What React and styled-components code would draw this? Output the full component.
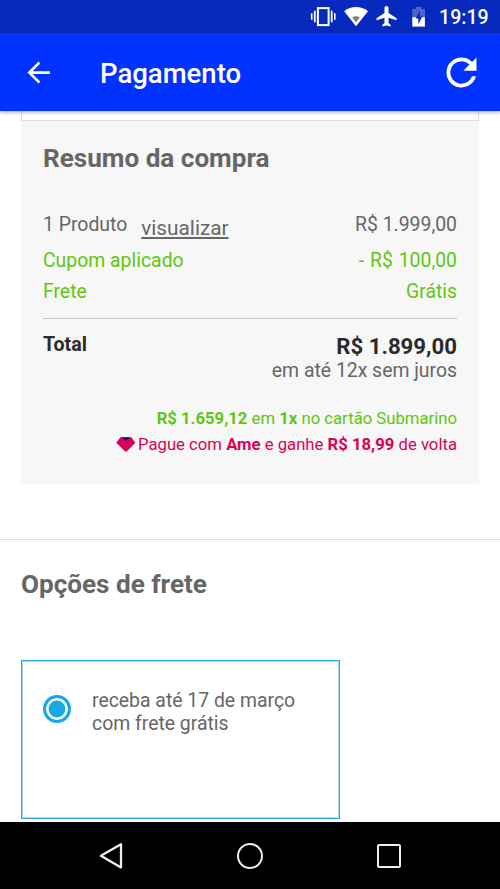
import React, { useState } from "react";
import styled, { createGlobalStyle } from "styled-components";

const summaryRows = [
  { id: "coupon", label: "Cupom aplicado", value: "- R$ 100,00", height: 31 },
  { id: "shipping", label: "Frete", value: "Grátis", height: 30 },
];

const StatusIcons = () => (
  <svg width="118" height="33" viewBox="310 0 118 33" fill="none">
    {/* vibrate */}
    <rect x="317.9" y="8.1" width="10.7" height="17" stroke="#fff" strokeWidth="2" />
    <path d="M314.8 10.7v11.6M331.7 10.7v11.6" stroke="#fff" strokeWidth="1.8" />
    <path d="M311.7 13.2v6.6M334.8 13.2v6.6" stroke="#fff" strokeWidth="1.6" />
    {/* wifi */}
    <path d="M344.2 11.2Q349.5 7 356 7T368 11.2L356 26.2z" fill="#fff" />
    <path d="M352.2 17.3q3.8-2 7.6 0L356 22.6z" fill="#7f8078" />
    {/* airplane */}
    <path
      d="M396.6 20.3v-2.1l-8.1-5.3V7.8c0-1.1-.9-1.9-2-1.9s-2 .8-2 1.9v5.1l-8 5.3v2.1l8-2.6v5.4l-2.1 1.6v1.9l4.1-1.1 4.1 1.1v-1.9l-2.1-1.6v-5.4z"
      fill="#fff"
    />
    {/* battery */}
    <path d="M412.3 8.9h3.6V7h5.4v1.9h3.6v9h-12.6z" fill="#5165c8" />
    <path d="M412.3 17.3h12.6v9.3h-12.6z" fill="#fff" />
    <path d="M419.8 10.8l-4.2 7.6h2.7v5.8l4-7.6h-2.5z" fill="#0a2ab8" />
  </svg>
);

const BackIcon = () => (
  <svg width="33" height="33" viewBox="0 0 24 24">
    <path
      d="M20.3 11H7.7l5.6-5.6L12 4 4 12l8 8 1.3-1.4L7.7 13h12.6z"
      fill="#fff"
    />
  </svg>
);

const RefreshIcon = () => (
  <svg width="45" height="45" viewBox="0 0 24 24">
    <path
      d="M17.65 6.35A7.96 7.96 0 0 0 12 4a8 8 0 1 0 7.73 10h-2.08A6 6 0 1 1 12 6c1.66 0 3.14.69 4.22 1.78L13 11h7V4z"
      fill="#fff"
    />
  </svg>
);

const AmeIcon = () => (
  <svg width="20" height="16" viewBox="0 0 20 16">
    <path d="M4.4.3h10.9L19.4 5.8l-8.2 8.3q-1.3 1.2-2.5 0L.3 5.8z" fill="#d5005c" />
    <path d="M5.6.3h8.8L9.9 3.6z" fill="#22106c" />
  </svg>
);

const App = () => {
  const [selected, setSelected] = useState(true);

  return (
    <Screen>
      <GlobalStyle />
      <StatusBar>
        <StatusIcons />
        <Clock>19:19</Clock>
      </StatusBar>
      <AppBar>
        <IconButton aria-label="Voltar">
          <BackIcon />
        </IconButton>
        <PageTitle>Pagamento</PageTitle>
        <IconButton aria-label="Atualizar">
          <RefreshIcon />
        </IconButton>
      </AppBar>

      <Content>
        <PreviousBox />
        <Summary>
          <SectionTitle>Resumo da compra</SectionTitle>
          <ProductRow>
            <span>1 Produto</span>
            <ViewLink>visualizar</ViewLink>
            <Price>R$ 1.999,00</Price>
          </ProductRow>
          {summaryRows.map(({ id, label, value, height }) => (
            <DiscountRow key={id} $height={height}>
              <span>{label}</span>
              <DiscountValue>{value}</DiscountValue>
            </DiscountRow>
          ))}
          <Divider />
          <TotalRow>
            <TotalLabel>Total</TotalLabel>
            <TotalValues>
              <TotalPrice>R$ 1.899,00</TotalPrice>
              <Installments>em até 12x sem juros</Installments>
            </TotalValues>
          </TotalRow>
          <Offer $color="#61c611">
            <span>
              <b>R$ 1.659,12</b> em <b>1x</b> no cartão Submarino
            </span>
          </Offer>
          <Offer $color="#db0159">
            <AmeIcon />
            <span>
              Pague com <b>Ame</b> e ganhe <b>R$ 18,99</b> de volta
            </span>
          </Offer>
        </Summary>

        <Shipping>
          <SectionTitle>Opções de frete</SectionTitle>
          <ShippingOption onClick={() => setSelected(true)}>
            <Radio $checked={selected} />
            <OptionText>
              receba até 17 de março
              <br />
              com frete grátis
            </OptionText>
          </ShippingOption>
        </Shipping>
      </Content>

      <NavBar>
        <svg width="26" height="28" viewBox="0 0 26 28">
          <path
            d="M22 2.2v23.2L1.9 13.8z"
            fill="none"
            stroke="#eee"
            strokeWidth="2.3"
            strokeLinejoin="round"
          />
        </svg>
        <HomeKey />
        <RecentKey />
      </NavBar>
    </Screen>
  );
};

const GlobalStyle = createGlobalStyle`
  * {
    box-sizing: border-box;
  }
  body {
    margin: 0;
    background: #fff;
    font-family: Roboto, sans-serif;
    color: #666;
  }
`;

const Screen = styled.div`
  width: 500px;
  height: 889px;
  display: flex;
  flex-direction: column;
  overflow: hidden;
`;

const StatusBar = styled.div`
  height: 33px;
  flex-shrink: 0;
  display: flex;
  justify-content: flex-end;
  padding-right: 11px;
  background: #0829bd;
`;

const Clock = styled.span`
  width: 50px;
  margin-left: 11px;
  font-size: 19.6px;
  font-weight: 500;
  line-height: 35px;
  color: #fff;
`;

const AppBar = styled.header`
  position: relative;
  height: 78px;
  flex-shrink: 0;
  display: flex;
  align-items: center;
  padding: 0 16px 0 22px;
  background: #0232ff;
  box-shadow: 0 1px 4px rgba(0, 0, 0, 0.4);
`;

const IconButton = styled.button`
  display: flex;
  padding: 0;
  border: none;
  background: transparent;
`;

const PageTitle = styled.h1`
  flex: 1;
  margin: 3px 0 0 45px;
  font-size: 27.5px;
  font-weight: 500;
  line-height: 32px;
  color: #fff;
`;

const Content = styled.main`
  flex: 1;
  min-height: 0;
`;

const PreviousBox = styled.div`
  height: 10px;
  margin: 0 21px;
  border: 1px solid #ddd;
  border-top: none;
`;

const Summary = styled.section`
  height: 363px;
  margin: 0 21px;
  padding: 21px 22px 0;
  background: #f7f7f7;
`;

const SectionTitle = styled.h2`
  margin: 0;
  font-size: 26.1px;
  font-weight: 700;
  line-height: 32px;
  color: #666;
`;

const ProductRow = styled.div`
  display: flex;
  height: 36px;
  margin-top: 36px;
  font-size: 19.4px;
  line-height: 30px;
`;

const ViewLink = styled.a`
  margin: 3px 0 0 14px;
  font-size: 20.8px;
  text-decoration: underline;
`;

const Price = styled.span`
  margin-left: auto;
`;

const DiscountRow = styled.div`
  display: flex;
  justify-content: space-between;
  height: ${(props) => props.$height}px;
  font-size: 19.4px;
  line-height: 30px;
  color: #61c611;
`;

const DiscountValue = styled.span`
  word-spacing: 1px;
`;

const Divider = styled.hr`
  height: 1px;
  margin: 11px 0 14px;
  border: none;
  background: #c6c8cc;
`;

const TotalRow = styled.div`
  display: flex;
  justify-content: space-between;
  height: 73px;
`;

const TotalLabel = styled.strong`
  font-size: 19.6px;
  line-height: 24px;
  color: #2b2b2b;
`;

const TotalValues = styled.div`
  display: flex;
  flex-direction: column;
  align-items: flex-end;
`;

const TotalPrice = styled.strong`
  font-size: 22.2px;
  line-height: 26px;
  color: #2b2b2b;
`;

const Installments = styled.span`
  font-size: 19.4px;
  line-height: 23px;
`;

const Offer = styled.div`
  display: flex;
  align-items: center;
  justify-content: flex-end;
  gap: 2px;
  height: 26px;
  font-size: 16.7px;
  line-height: 26px;
  color: ${(props) => props.$color};
`;

const Shipping = styled.section`
  margin-top: 55px;
  padding: 28px 21px 0;
  border-top: 1px solid #dfdfdf;
`;

const ShippingOption = styled.div`
  display: flex;
  width: 319px;
  height: 159px;
  margin-top: 60px;
  padding: 28px 22px 0 21px;
  border: 1px solid #2ba8d8;
  box-shadow: inset 0 0 0 1px rgba(43, 168, 216, 0.4);
`;

const Radio = styled.span`
  width: 28px;
  height: 28px;
  margin-top: 6px;
  border: 3px solid #15a9e8;
  border-radius: 50%;
  background: ${(props) => (props.$checked ? "#15a9e8" : "#fff")};
  box-shadow: inset 0 0 0 2.6px #fff;
`;

const OptionText = styled.span`
  margin-left: 21px;
  font-size: 19.4px;
  line-height: 23px;
`;

const NavBar = styled.footer`
  height: 67px;
  flex-shrink: 0;
  display: flex;
  align-items: center;
  justify-content: space-between;
  padding: 0 99px;
  background: #000;
`;

const HomeKey = styled.span`
  width: 26px;
  height: 26px;
  margin-right: 2px;
  border: 2.5px solid #eee;
  border-radius: 50%;
`;

const RecentKey = styled.span`
  width: 24px;
  height: 24px;
  border: 2px solid #eee;
  border-radius: 2px;
`;

export default App;
